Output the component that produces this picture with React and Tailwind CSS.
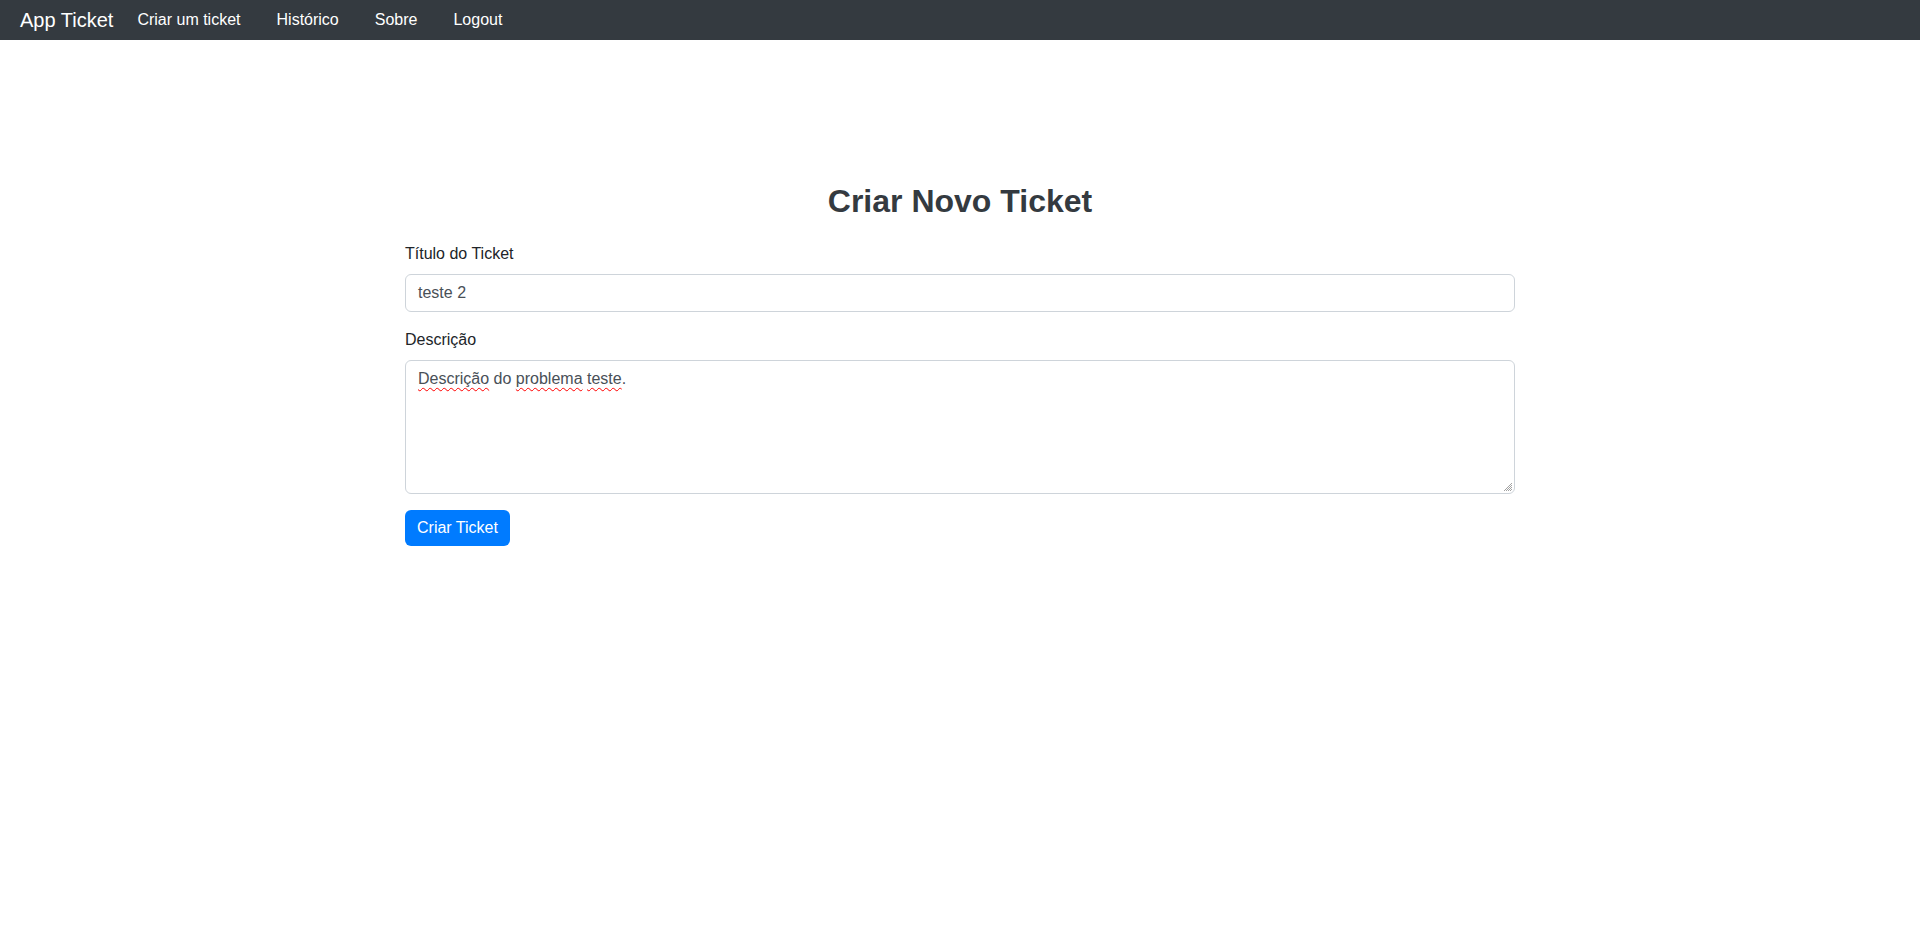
import React from "react";

export default function App() {
  const font = { fontFamily: '"Liberation Sans", Arial, sans-serif' };
  return (
    <div className="min-h-[938px] bg-white" style={font}>
      <nav className="h-10 bg-[#343a40] flex items-center pl-5">
        <a className="text-[20px] leading-[30px] text-white mr-4">App Ticket</a>
        <ul className="flex items-center gap-5">
          {["Criar um ticket", "Histórico", "Sobre", "Logout"].map((t) => (
            <li key={t}>
              <a className="block px-2 text-[16px] leading-6 text-white">{t}</a>
            </li>
          ))}
        </ul>
      </nav>

      <main className="w-[1110px] mx-auto pt-[142px]">
        <h2 className="text-[32px] leading-[1.2] font-bold text-center text-[#343a40] mb-[22px]">
          Criar Novo Ticket
        </h2>
        <form className="flex flex-col">
          <div className="mb-4">
            <label className="block text-[16px] leading-6 text-[#212529] mb-2">Título do Ticket</label>
            <div className="h-[38px] border border-[#ced4da] rounded-[6px] px-3 flex items-center text-[16px] leading-6 text-[#495057]">
              teste 2
            </div>
          </div>
          <div className="mb-4">
            <label className="block text-[16px] leading-6 text-[#212529] mb-2">Descrição</label>
            <div className="relative h-[134px] border border-[#ced4da] rounded-[6px] px-3 py-[6px] text-[16px] leading-6 text-[#495057]">
              <span className="underline decoration-wavy decoration-[#ff0000] decoration-1 underline-offset-[3px]">Descrição</span>{" "}
              do{" "}
              <span className="underline decoration-wavy decoration-[#ff0000] decoration-1 underline-offset-[3px]">problema</span>{" "}
              <span className="underline decoration-wavy decoration-[#ff0000] decoration-1 underline-offset-[3px]">teste</span>.
              <svg className="absolute right-[1px] bottom-[1px]" width="10" height="10" viewBox="0 0 10 10">
                <path d="M9 1L1 9M9 3L3 9M9 5L5 9M9 7L7 9" stroke="#8a8a8a" strokeWidth="0.8" />
              </svg>
            </div>
          </div>
          <div>
            <button type="button" className="h-9 px-3 rounded-[6px] bg-[#007bff] text-white text-[16px] leading-6">
              Criar Ticket
            </button>
          </div>
        </form>
      </main>
    </div>
  );
}
